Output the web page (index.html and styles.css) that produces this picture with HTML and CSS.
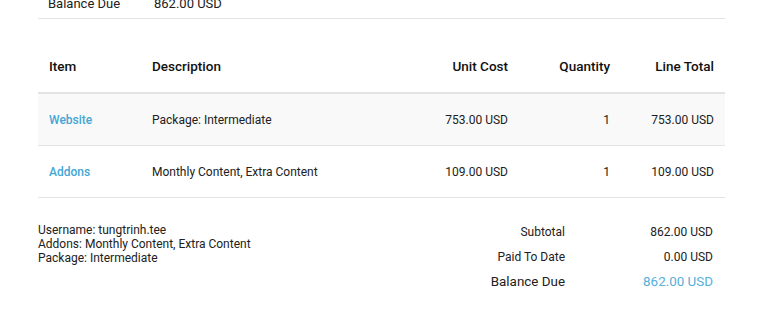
FILE: index.html
```html
<!DOCTYPE html>
<html>
<head>
<meta charset="utf-8">
<link rel="stylesheet" href="styles.css">
</head>
<body>
<div class="invoice">
  <div class="prev-row">
    <span class="prev-label">Balance Due</span>
    <span class="prev-value">862.00 USD</span>
  </div>

  <table class="items">
    <thead>
      <tr>
        <th class="c-item">Item</th>
        <th class="c-desc">Description</th>
        <th class="c-num c-cost">Unit Cost</th>
        <th class="c-num c-qty">Quantity</th>
        <th class="c-num c-total">Line Total</th>
      </tr>
    </thead>
    <tbody>
      <tr class="odd">
        <td class="c-item"><a class="link">Website</a></td>
        <td class="c-desc">Package: Intermediate</td>
        <td class="c-num">753.00 USD</td>
        <td class="c-num">1</td>
        <td class="c-num">753.00 USD</td>
      </tr>
      <tr>
        <td class="c-item"><a class="link">Addons</a></td>
        <td class="c-desc">Monthly Content, Extra Content</td>
        <td class="c-num">109.00 USD</td>
        <td class="c-num">1</td>
        <td class="c-num">109.00 USD</td>
      </tr>
    </tbody>
  </table>

  <div class="footer">
    <div class="notes">
      Username: tungtrinh.tee<br>
      Addons: Monthly Content, Extra Content<br>
      Package: Intermediate
    </div>
    <div class="totals">
      <div class="t-row"><span class="t-label">Subtotal</span><span class="t-value">862.00 USD</span></div>
      <div class="t-row"><span class="t-label">Paid To Date</span><span class="t-value">0.00 USD</span></div>
      <div class="t-row t-big"><span class="t-label">Balance Due</span><span class="t-value t-blue">862.00 USD</span></div>
    </div>
  </div>
</div>
</body>
</html>
```

FILE: styles.css
```css
html, body {
  margin: 0;
  padding: 0;
  background: #ffffff;
}
body {
  font-family: Roboto, "Liberation Sans", sans-serif;
  color: #212121;
  font-size: 12px;
}
.invoice {
  width: 687px;
  margin-left: 38px;
}
.prev-row {
  margin-top: -11px;
  height: 29px;
  border-bottom: 1px solid #e3e3e3;
  display: flex;
  align-items: center;
  font-size: 13px;
}
.prev-label {
  margin-left: 10px;
  width: 106px;
}
.items {
  width: 100%;
  border-collapse: collapse;
  margin-top: 22px;
}
.items th {
  font-weight: 500;
  font-size: 13.5px;
  height: 49px;
  padding: 0 11px 2px;
  text-align: left;
  border-bottom: 2px solid #e3e3e3;
  color: #111111;
}
.items td {
  height: 51px;
  padding: 0 11px;
  border-bottom: 1px solid #e3e3e3;
  vertical-align: middle;
}
.items tr.odd td {
  background: #f9f9f9;
}
.items .c-item { width: 81px; }
.items .c-desc { width: auto; }
.items .c-num { text-align: right; }
.items .c-cost { width: 110px; }
.items .c-qty { width: 80px; }
.items .c-total { width: 82px; }
.link {
  color: #43a7d6;
  font-weight: 500;
  text-decoration: none;
}
.footer {
  display: flex;
  justify-content: space-between;
  padding-top: 25px;
}
.notes {
  line-height: 14px;
}
.totals {
  width: 300px;
  padding-right: 12px;
  margin-top: -4px;
}
.t-row {
  display: flex;
  justify-content: flex-end;
  height: 25px;
  align-items: center;
}
.t-label {
  text-align: right;
}
.t-value {
  width: 148px;
  text-align: right;
}
.t-big {
  font-size: 13.4px;
}
.t-blue {
  color: #55b0dc;
}
```
